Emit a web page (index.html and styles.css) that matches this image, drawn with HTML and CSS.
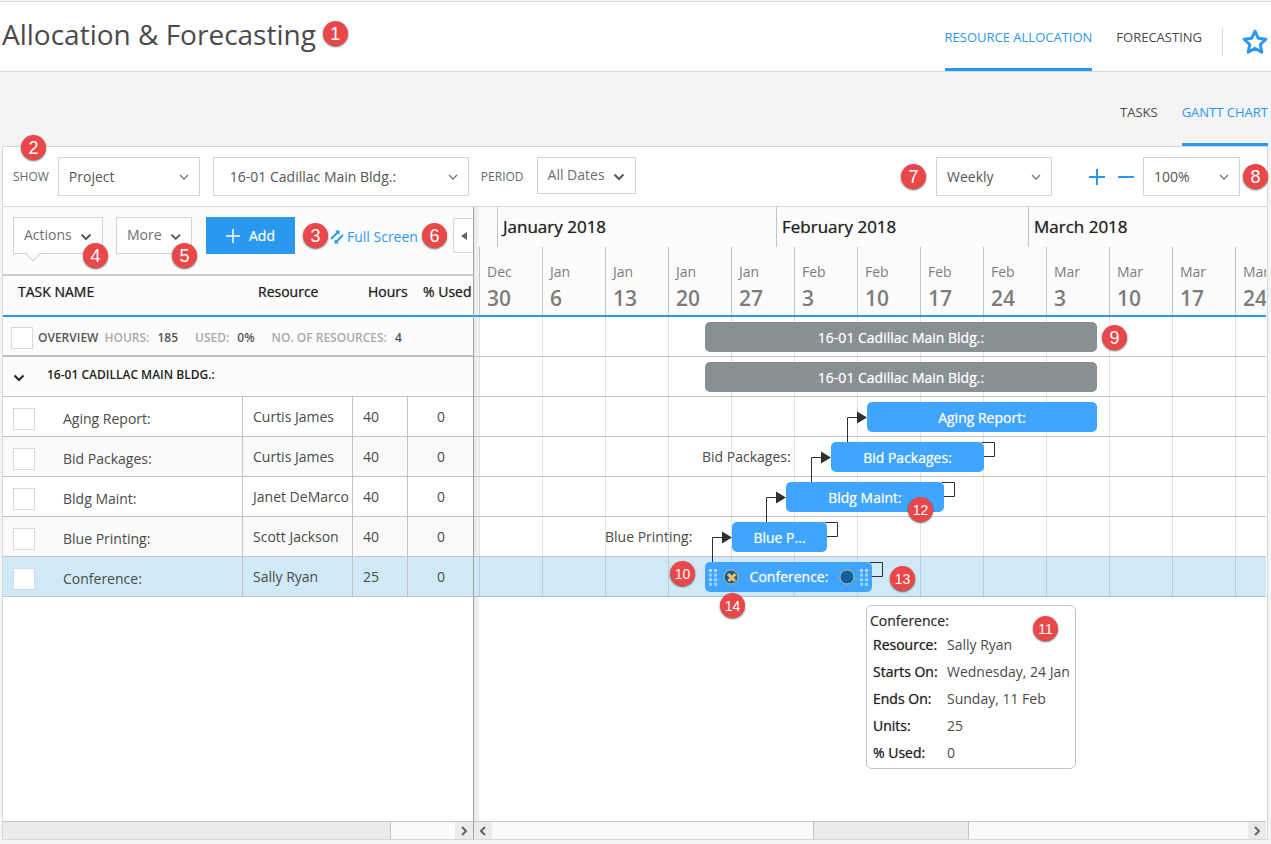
FILE: index.html
```html
<!DOCTYPE html>
<html lang="en">
<head>
    <meta charset="UTF-8">
    <meta name="viewport" content="width=device-width, initial-scale=1.0">
    <title>Allocation &amp; Forecasting</title>
    <link rel="stylesheet" href="styles.css">
</head>
<body>
    <header class="header">
        <h1>Allocation &amp; Forecasting</h1>
        <span class="badge">1</span>
        <nav class="tabs">
            <a href="#" class="active">RESOURCE ALLOCATION</a>
            <a href="#">FORECASTING</a>
        </nav>
        <button class="star" aria-label="Favorite">
            <svg width="26" height="26" viewBox="0 0 26 26"><path d="M13 2.2l3.3 7.1 7.6.9-5.6 5.3 1.5 7.7-6.8-3.8-6.8 3.8 1.5-7.7L2.1 10.2l7.6-.9z" fill="none" stroke="#2b98f0" stroke-width="3" stroke-linejoin="round"/></svg>
        </button>
    </header>

    <nav class="tabs subtabs">
        <a href="#">TASKS</a>
        <a href="#" class="active">GANTT CHART</a>
    </nav>

    <main class="panel">
        <div class="filters">
            <span class="badge badge-show">2</span>
            <label for="show">SHOW</label>
            <div class="select select-show">
                <select id="show"><option>Project</option></select>
                <svg width="10" height="6" viewBox="0 0 10 6"><path d="M1 1l4 4 4-4"/></svg>
            </div>
            <div class="select select-project">
                <select aria-label="Project"><option>16-01 Cadillac Main Bldg.:</option></select>
                <svg width="10" height="6" viewBox="0 0 10 6"><path d="M1 1l4 4 4-4"/></svg>
            </div>
            <label for="period">PERIOD</label>
            <button id="period" class="drop">All Dates
                <svg width="12" height="8" viewBox="0 0 12 8"><path d="M1.5 1.5L6 6l4.5-4.5"/></svg>
            </button>
            <div class="zoom">
                <span class="badge">7</span>
                <div class="select select-scale">
                    <select aria-label="Scale"><option>Weekly</option></select>
                    <svg width="10" height="6" viewBox="0 0 10 6"><path d="M1 1l4 4 4-4"/></svg>
                </div>
                <button class="zoom-btn" aria-label="Zoom in"><svg width="16" height="16" viewBox="0 0 16 16"><path d="M8 0v16M0 8h16"/></svg></button>
                <button class="zoom-btn" aria-label="Zoom out"><svg width="16" height="16" viewBox="0 0 16 16"><path d="M0 8h16"/></svg></button>
                <div class="select select-zoom">
                    <select aria-label="Zoom"><option>100%</option></select>
                    <svg width="10" height="6" viewBox="0 0 10 6"><path d="M1 1l4 4 4-4"/></svg>
                </div>
                <span class="badge">8</span>
            </div>
        </div>

        <div class="gantt">
            <section class="left">
                <div class="actions">
                    <button class="drop drop-actions">Actions
                        <svg width="12" height="8" viewBox="0 0 12 8"><path d="M1.5 1.5L6 6l4.5-4.5"/></svg>
                        <span class="badge">4</span>
                    </button>
                    <button class="drop drop-more">More
                        <svg width="12" height="8" viewBox="0 0 12 8"><path d="M1.5 1.5L6 6l4.5-4.5"/></svg>
                        <span class="badge">5</span>
                    </button>
                    <button class="add">
                        <svg width="14" height="14" viewBox="0 0 14 14"><path d="M7 0v14M0 7h14" stroke="#fff" stroke-width="1.5"/></svg>
                        Add
                    </button>
                    <span class="badge">3</span>
                    <a href="#" class="full">
                        <svg width="14" height="14" viewBox="0 0 14 14"><path d="M1 9l7-7M6 12l7-7" stroke="#2b98f0" stroke-width="2"/><path d="M5 .5h4.500V5zM4.500 9v4.500H9z" fill="#2b98f0"/></svg>
                        Full Screen
                    </a>
                    <span class="badge">6</span>
                    <button class="collapse" aria-label="Collapse"><svg width="6" height="8" viewBox="0 0 6 8"><path d="M6 0v8L0 4z" fill="#666"/></svg></button>
                </div>
                <table class="tasks">
                    <colgroup><col class="c-name"><col class="c-res"><col class="c-hours"><col></colgroup>
                    <thead>
                        <tr><th>TASK NAME</th><th>Resource</th><th>Hours</th><th>% Used</th></tr>
                    </thead>
                    <tbody>
                        <tr class="overview">
                            <td colspan="4">
                                <div class="cell">
                                    <input type="checkbox" aria-label="Overview">
                                    <b>OVERVIEW</b><i>HOURS:</i><b class="num">185</b><i>USED:</i><b class="num">0%</b><i>NO. OF RESOURCES:</i><b>4</b>
                                </div>
                            </td>
                        </tr>
                        <tr class="project">
                            <td colspan="4">
                                <div class="cell">
                                    <svg width="12" height="8" viewBox="0 0 12 8"><path d="M1.5 1.5L6 6l4.5-4.5" fill="none" stroke="#222" stroke-width="2"/></svg>
                                    16-01 CADILLAC MAIN BLDG.:
                                </div>
                            </td>
                        </tr>
                        <tr><td><label class="cell"><input type="checkbox">Aging Report:</label></td><td>Curtis James</td><td>40</td><td>0</td></tr>
                        <tr><td><label class="cell"><input type="checkbox">Bid Packages:</label></td><td>Curtis James</td><td>40</td><td>0</td></tr>
                        <tr><td><label class="cell"><input type="checkbox">Bldg Maint:</label></td><td>Janet DeMarco</td><td>40</td><td>0</td></tr>
                        <tr><td><label class="cell"><input type="checkbox">Blue Printing:</label></td><td>Scott Jackson</td><td>40</td><td>0</td></tr>
                        <tr class="selected"><td><label class="cell"><input type="checkbox">Conference:</label></td><td>Sally Ryan</td><td>25</td><td>0</td></tr>
                    </tbody>
                </table>
                <div class="scroll">
                    <div class="track"><div class="thumb thumb-left"></div></div>
                    <button aria-label="Scroll right"><svg width="6" height="10" viewBox="0 0 6 10"><path d="M1 1l4 4-4 4"/></svg></button>
                </div>
            </section>

            <section class="right">
                <div class="months">
                    <div style="width: 18px"></div>
                    <div style="width: 279px">January 2018</div>
                    <div style="width: 252px">February 2018</div>
                    <div style="width: 279px">March 2018</div>
                </div>
                <div class="weeks">
                    <div>Dec<b>30</b></div>
                    <div>Jan<b>6</b></div>
                    <div>Jan<b>13</b></div>
                    <div>Jan<b>20</b></div>
                    <div>Jan<b>27</b></div>
                    <div>Feb<b>3</b></div>
                    <div>Feb<b>10</b></div>
                    <div>Feb<b>17</b></div>
                    <div>Feb<b>24</b></div>
                    <div>Mar<b>3</b></div>
                    <div>Mar<b>10</b></div>
                    <div>Mar<b>17</b></div>
                    <div>Mar<b>24</b></div>
                </div>
                <div class="chart">
                    <div class="row"><div class="bar bar-project" style="left: 231px; width: 392px">16-01 Cadillac Main Bldg.:</div></div>
                    <div class="row"><div class="bar bar-project" style="left: 231px; width: 392px">16-01 Cadillac Main Bldg.:</div></div>
                    <div class="row"><div class="bar" style="left: 393px; width: 230px">Aging Report:</div></div>
                    <div class="row"><span class="side" style="left: 228px">Bid Packages:</span><div class="bar" style="left: 357px; width: 153px">Bid Packages:</div></div>
                    <div class="row"><div class="bar" style="left: 312px; width: 158px">Bldg Maint:</div></div>
                    <div class="row"><span class="side" style="left: 131px">Blue Printing:</span><div class="bar" style="left: 258px; width: 95px">Blue P...</div></div>
                    <div class="row selected">
                        <div class="bar bar-edit" style="left: 231px; width: 167px">
                            <svg width="8" height="17" viewBox="0 0 8 17"><path d="M1.5 0v17M6.5 0v17" stroke="#a5d3ff" stroke-width="3" stroke-dasharray="3 1.6"/></svg>
                            <svg width="16" height="16" viewBox="0 0 16 16"><circle cx="8" cy="8" r="7" fill="#0560a6" stroke="#d8b46c"/><path d="M5 5l7 7M12.5 5l-7 7" stroke="#ffc061" stroke-width="3"/></svg>
                            <span>Conference:</span>
                            <svg width="16" height="16" viewBox="0 0 16 16"><circle cx="8" cy="8" r="7" fill="#0560a6" stroke="#d8b46c"/></svg>
                            <svg width="8" height="17" viewBox="0 0 8 17"><path d="M1.5 0v17M6.5 0v17" stroke="#a5d3ff" stroke-width="3" stroke-dasharray="3 1.6"/></svg>
                        </div>
                    </div>

                    <!-- dependency arrows -->
                    <svg class="links" width="640" height="280" viewBox="-5 0 640 280">
                        <g fill="none" stroke="#2c2f33">
                            <path d="M233.5 245v-24.5H244M287.5 205v-24.5H298M332.5 165v-24.5H343M368.5 125v-24.5H379"/>
                            <path d="M346 205.5h12.5v14H348M463 165.5h12.5v14H465M503 125.5h12.5v14H505M391 245.5h12.5v14H393"/>
                        </g>
                        <path fill="#2c2f33" d="M243 214.5l10 6-10 6zM297 174.5l10 6-10 6zM342 134.5l10 6-10 6zM378 94.5l10 6-10 6z"/>
                    </svg>

                    <div class="tip">
                        <h2>Conference:</h2>
                        <dl>
                            <dt>Resource:</dt><dd>Sally Ryan</dd>
                            <dt>Starts On:</dt><dd>Wednesday, 24 Jan</dd>
                            <dt>Ends On:</dt><dd>Sunday, 11 Feb</dd>
                            <dt>Units:</dt><dd>25</dd>
                            <dt>% Used:</dt><dd>0</dd>
                        </dl>
                    </div>

                    <span class="badge" style="left: 628px; top: 8px">9</span>
                    <span class="badge small" style="left: 196px; top: 244px">10</span>
                    <span class="badge small" style="left: 559px; top: 299px">11</span>
                    <span class="badge small" style="left: 434px; top: 180px">12</span>
                    <span class="badge small" style="left: 416px; top: 249px">13</span>
                    <span class="badge small" style="left: 246px; top: 276px">14</span>
                </div>
                <div class="scroll">
                    <button aria-label="Scroll left"><svg width="6" height="10" viewBox="0 0 6 10"><path d="M5 1L1 5l4 4"/></svg></button>
                    <div class="track"><div class="thumb thumb-right"></div></div>
                    <button aria-label="Scroll right"><svg width="6" height="10" viewBox="0 0 6 10"><path d="M1 1l4 4-4 4"/></svg></button>
                </div>
            </section>
        </div>
    </main>
</body>
</html>
```
FILE: styles.css
```css
* {
    box-sizing: border-box;
    margin: 0;
    padding: 0;
}

body {
    display: flex;
    flex-direction: column;
    min-height: 100vh;
    padding: 1px 0 4px;
    background-color: #f4f4f4;
    color: #4a4a4a;
    font-family: "Open Sans", sans-serif;
    font-size: 14px;
    line-height: 20px;
}

button, select {
    font: inherit;
    color: inherit;
    background: none;
    border: none;
    cursor: pointer;
}

a {
    color: inherit;
    text-decoration: none;
}

.badge {
    display: flex;
    flex: none;
    align-items: center;
    justify-content: center;
    width: 25px;
    height: 25px;
    border-radius: 50%;
    background-color: #e94749;
    box-shadow: 0 1px 2px rgba(0, 0, 0, 0.6);
    color: white;
    font-family: "Liberation Sans", sans-serif;
    font-size: 18px;
}

.badge.small {
    font-size: 14px;
}

/* header */
.header {
    display: flex;
    align-items: center;
    height: 71px;
    padding: 0 3px 0 2px;
    background-color: white;
    border-top: 1px solid #d3d9e2;
    border-bottom: 1px solid #d3d9e2;
}

.header h1 {
    margin: 0 7px 6px 0;
    font-size: 28px;
    font-weight: 400;
    line-height: 40px;
}

.header .badge {
    margin-bottom: 6px;
}

.tabs {
    display: flex;
    gap: 24px;
    margin-left: auto;
    align-self: stretch;
    font-size: 13px;
}

.tabs a {
    padding-top: 25px;
    border-bottom: 3px solid transparent;
}

.tabs a.active {
    color: #2b98f0;
    border-color: #2b98f0;
}

.star {
    display: flex;
    align-items: center;
    justify-content: flex-end;
    width: 46px;
    height: 28px;
    margin: 10px 0 0 20px;
    border-left: 1px solid #d3d9e2;
}

.subtabs {
    height: 74px;
    padding-right: 3px;
}

.subtabs a {
    padding-top: 30px;
}

/* filter bar */
.panel {
    display: flex;
    flex-direction: column;
    flex: 1;
    margin: 0 3px 0 2px;
    background-color: white;
    border: 1px solid #d3d9e2;
}

.filters {
    position: relative;
    display: flex;
    align-items: flex-start;
    height: 60px;
    padding: 10px 0 0 10px;
    border-bottom: 1px solid #d3d9e2;
}

.filters label {
    margin-top: 10px;
    color: #666a70;
    font-size: 12px;
}

.badge-show {
    position: absolute;
    left: 18px;
    top: -12px;
}

.select {
    position: relative;
    height: 39px;
    border: 1px solid #cfd6df;
}

.select select {
    width: 100%;
    height: 100%;
    padding-left: 10px;
    appearance: none;
    color: #555;
}

.select svg {
    position: absolute;
    right: 10px;
    top: 16px;
    fill: none;
    stroke: #777;
    stroke-width: 1.3;
    pointer-events: none;
}

.select-show {
    width: 142px;
    margin: 0 13px 0 9px;
}

.select-project {
    width: 256px;
    margin-right: 12px;
}

.select-project select {
    padding-left: 16px;
}

.drop {
    position: relative;
    display: flex;
    align-items: center;
    gap: 8px;
    height: 37px;
    padding: 0 10px 2px;
    background-color: white;
    border: 1px solid #c9d3dd;
    color: #6c7076;
}

.drop svg {
    margin-top: 4px;
    fill: none;
    stroke: #555a60;
    stroke-width: 2;
}

#period {
    margin-left: 13px;
}

.zoom {
    display: flex;
    align-items: center;
    margin: 0 -1px 0 auto;
}

.select-scale {
    width: 116px;
    margin: 0 37px 0 10px;
}

.zoom-btn {
    display: flex;
    margin-right: 13px;
}

.zoom-btn svg {
    stroke: #2b98f0;
    stroke-width: 2;
}

.select-zoom {
    width: 97px;
    margin: 0 3px 0 -4px;
}

/* task list */
.gantt {
    display: flex;
    flex: 1;
}

.left {
    display: flex;
    flex: none;
    flex-direction: column;
    width: 471px;
    border-right: 1px solid #a3a3a3;
}

.actions {
    display: flex;
    align-items: center;
    height: 69px;
    padding: 0 0 10px 10px;
    background-color: #fcfcfc;
    border-bottom: 2px solid #ccc;
}

.drop-actions {
    width: 90px;
    margin-right: 13px;
}

.drop-actions::after {
    content: "";
    position: absolute;
    left: 13px;
    bottom: -6px;
    width: 11px;
    height: 11px;
    background: linear-gradient(135deg, transparent 50%, #fcfcfc 50%);
    border: solid #c9d3dd;
    border-width: 0 1px 1px 0;
    transform: rotate(45deg);
}

.drop-more {
    width: 76px;
    margin-right: 14px;
}

.drop .badge {
    position: absolute;
    right: -6px;
    bottom: -15px;
}

.add {
    display: flex;
    align-items: center;
    justify-content: center;
    gap: 9px;
    width: 89px;
    height: 37px;
    margin-right: 8px;
    background-color: #2b98f0;
    color: white;
    text-shadow: 0 0 1px rgba(255, 255, 255, 0.5);
}

.full {
    display: flex;
    align-items: center;
    gap: 3px;
    margin: 2px 4px 0 2px;
    color: #2b98f0;
}

.collapse {
    display: flex;
    align-items: center;
    justify-content: center;
    width: 20px;
    height: 35px;
    margin-left: auto;
    background-color: white;
    border: 1px solid #d5d5d5;
    border-right: none;
    border-radius: 3px 0 0 3px;
}

.tasks {
    width: 100%;
    table-layout: fixed;
    border-spacing: 0;
}

.c-name {
    width: 240px;
}

.c-res {
    width: 110px;
}

.c-hours {
    width: 55px;
}

.tasks th {
    height: 41px;
    padding: 0 0 8px 15px;
    background-color: #fcfcfc;
    border-bottom: 2px solid #2b98f0;
    color: #222;
    font-weight: 400;
    text-align: left;
    text-shadow: 0 0 1px #777;
    white-space: nowrap;
}

.tasks td {
    height: 40px;
    padding-left: 10px;
    background-color: white;
    border-right: 1px solid #c4c4c4;
    border-bottom: 1px solid #c4c4c4;
    white-space: nowrap;
}

.tasks td:last-child {
    border-right: none;
}

.tasks td:nth-child(4) {
    padding-left: 29px;
}

.tasks tr:nth-child(even) td {
    background-color: #fafafa;
}

.tasks tr.overview td, .tasks tr.project td {
    padding-left: 8px;
    background-color: #fcfcfc;
    font-size: 12px;
}

.tasks tr.overview td {
    border-bottom: 2px solid #bbb;
}

.tasks tr.selected td {
    background-color: #cfe9f6;
}

.cell {
    display: flex;
    align-items: center;
    padding-top: 4px;
}

.cell input {
    width: 22px;
    height: 22px;
    margin-right: 28px;
    appearance: none;
    background-color: white;
    border: 1px solid #d3d9e6;
}

.overview input {
    margin-right: 5px;
}

.overview b, .overview i {
    margin-right: 6px;
    font-style: normal;
    font-weight: 600;
}

.overview b {
    color: #555;
}

.overview i {
    margin-right: 8px;
    color: #aaa;
}

.overview .num {
    margin-right: 17px;
}

.project .cell {
    gap: 22px;
    padding: 0 0 4px 2px;
    color: #222;
    font-weight: 600;
}

.project svg {
    margin-top: 6px;
}

/* scroll bars */
.scroll {
    display: flex;
    height: 18px;
    margin-top: auto;
    background-color: #fafafa;
    border-top: 1px solid #c4c4c4;
}

.scroll button {
    display: flex;
    align-items: center;
    justify-content: center;
    width: 18px;
    background-color: #ebebeb;
}

.scroll button svg {
    fill: none;
    stroke: #666;
    stroke-width: 2;
}

.track {
    flex: 1;
}

.thumb {
    height: 100%;
    background-color: #ebebeb;
    border-right: 1px solid #c4c4c4;
}

.thumb-left {
    width: 388px;
}

.thumb-right {
    width: 156px;
    margin-left: 321px;
    border-left: 1px solid #c4c4c4;
}

/* timeline */
.right {
    display: flex;
    flex: 1;
    flex-direction: column;
    min-width: 0;
    margin-right: 1px;
    overflow: hidden;
    background: linear-gradient(to right, #e8e8e8, #f4f4f4 5px, white 5px);
}

.months {
    display: flex;
    height: 40px;
    margin-left: 5px;
    background-color: #fcfcfc;
}

.months div {
    flex: none;
    padding: 10px 0 0 5px;
    border-left: 1px solid #c4c4c4;
    color: #222;
    font-size: 17px;
    text-shadow: 0 0 1px #777;
}

.months div:first-child {
    border: none;
}

.weeks {
    display: flex;
    height: 70px;
    padding-left: 5px;
    border-bottom: 2px solid #2b98f0;
}

.weeks div {
    flex: none;
    width: 63px;
    padding: 15px 0 0 7px;
    background-color: #fcfcfc;
    border-left: 1px solid #c4c4c4;
    color: #7c7c7c;
}

.weeks b {
    display: block;
    font-size: 21px;
    font-weight: 600;
    line-height: 32px;
}

.chart {
    position: relative;
    flex: 1;
}

.row {
    position: relative;
    height: 40px;
    background: repeating-linear-gradient(to right, #e2e2e2 0, #e2e2e2 1px, transparent 1px, transparent 63px) 5px 0 no-repeat;
    border-bottom: 1px solid #c4c4c4;
}

.row.selected {
    background-color: #cfe9f6;
    background-image: repeating-linear-gradient(to right, #b4d0de 0, #b4d0de 1px, transparent 1px, transparent 63px);
    border-bottom-color: #a0bfcd;
}

.bar {
    position: absolute;
    top: 5px;
    height: 30px;
    border-radius: 5px;
    background-color: #40a5ff;
    color: white;
    line-height: 32px;
    text-align: center;
    text-shadow: 0 0 1px rgba(255, 255, 255, 0.6);
}

.bar-project {
    background-color: #899093;
}

.bar-edit {
    display: flex;
    align-items: center;
    padding: 0 4px;
}

.bar-edit span {
    flex: 1;
}

.bar-edit svg:nth-of-type(2) {
    margin-left: 6px;
}

.bar-edit svg:nth-of-type(3) {
    margin-right: 5px;
}

.side {
    position: absolute;
    top: 10px;
}

.links {
    position: absolute;
    left: 0;
    top: 0;
    pointer-events: none;
}

.tip {
    position: absolute;
    left: 392px;
    top: 288px;
    width: 210px;
    padding: 5px 0 2px 3px;
    background-color: white;
    border: 1px solid #c4c4c4;
    border-radius: 6px;
}

.tip h2 {
    color: #333;
    font-size: 14px;
    font-weight: 400;
    text-shadow: 0 0 1px #999;
}

.tip dl {
    display: grid;
    grid-template-columns: 74px 1fr;
    padding-left: 3px;
    line-height: 27px;
    white-space: nowrap;
}

.tip dt {
    color: #222;
    text-shadow: 0 0 1px #777;
}

.chart > .badge {
    position: absolute;
}
```
